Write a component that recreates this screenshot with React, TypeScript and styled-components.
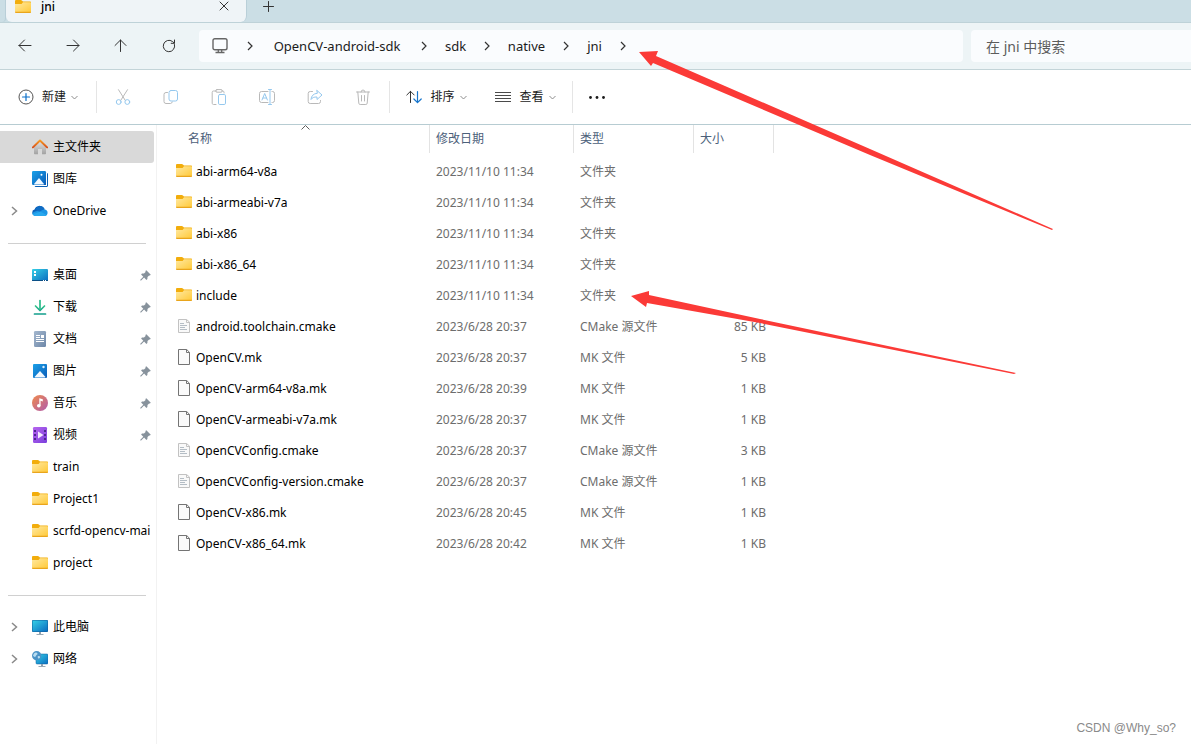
import React from 'react';
import styled, { createGlobalStyle, css } from 'styled-components';

const Global = createGlobalStyle`
  * { box-sizing: border-box; }
  body {
    margin: 0;
    background: #ffffff;
    color: #000000;
    font-family: "Noto Sans", "Noto Sans CJK SC", sans-serif;
    font-size: 12px;
    line-height: 16px;
  }
  button, input { font: inherit; color: inherit; }
`;

/* ---------- layout ---------- */

const Window = styled.div`
  position: relative;
  display: flex;
  flex-direction: column;
  min-height: 100vh;
  overflow: hidden;
`;

const bareButton = css`
  display: inline-flex;
  align-items: center;
  justify-content: center;
  padding: 0;
  border: 0;
  background: none;
  flex: none;
`;

const TabStrip = styled.header`
  display: flex;
  height: 23px;
  background: #cbdee5;
  border-bottom: 1px solid #bed2d8;
`;

const StripEdge = styled.div`
  width: 6px;
  border-right: 1px solid #b9cfd8;
  border-bottom-right-radius: 4px;
`;

const Tab = styled.div`
  display: flex;
  align-items: center;
  width: 241px;
  padding: 0 14px 8px 9px;
  gap: 10px;
  background: #eff4f7;
  border-radius: 0 0 6px 6px;
  border-right: 1px solid #b9cfd8;
`;

const TabTitle = styled.span`
  flex: 1;
  font-weight: 500;
  line-height: 14px;
`;

const TabButton = styled.button`
  ${bareButton}
  width: 16px;
  height: 16px;
`;

const NewTab = styled(TabButton)`
  margin-left: 14px;
`;

const NavBar = styled.nav`
  display: flex;
  align-items: center;
  height: 47px;
  padding-left: 1px;
  background: #edf4f6;
  border-bottom: 1px solid #c3d4d8;
`;

const NavButton = styled.button`
  ${bareButton}
  width: 48px;
  height: 32px;
`;

const AddressBar = styled.div`
  display: flex;
  align-items: center;
  flex: 1;
  height: 32px;
  margin-left: 6px;
  border-radius: 4px;
  background: #fafcfe;
  font-size: 13px;
`;

const AddressRoot = styled.button`
  ${bareButton}
  width: 41px;
  height: 28px;
`;

const Crumb = styled.button<{ $width: number }>`
  ${bareButton}
  width: ${p => p.$width}px;
  height: 28px;
  color: #1b1b1b;
  white-space: nowrap;
`;

const Separator = styled.span`
  display: flex;
  justify-content: center;
  flex: none;
  width: 20px;
`;

const SearchBox = styled.input`
  width: 220px;
  height: 32px;
  margin-left: 8px;
  padding: 0 15px;
  border: 0;
  border-radius: 4px 0 0 4px;
  background: #fafcfe;
  font-size: 14px;
  &::placeholder { color: #5c5c5c; opacity: 1; }
`;

const CommandBar = styled.div`
  display: flex;
  align-items: center;
  height: 55px;
  background: #ffffff;
  border-bottom: 1px solid #b7ccd2;
`;

const CommandGroup = styled.div`
  display: flex;
  margin: 0 2px;
`;

const Command = styled.button`
  ${bareButton}
  width: 48px;
  height: 32px;
`;

const MenuCommand = styled(Command)<{ $width: number }>`
  width: ${p => p.$width}px;
  gap: 5px;
  color: #1a1a1a;
  svg:first-child { margin-right: 3px; }
`;

const Rule = styled.div`
  width: 1px;
  height: 32px;
  background: #e5e5e5;
`;

const Body = styled.div`
  display: flex;
  flex: 1;
`;

const Sidebar = styled.aside`
  width: 157px;
  flex: none;
  padding-top: 6px;
  border-right: 1px solid #f2f2f2;
`;

const SideList = styled.ul`
  margin: 0;
  padding: 0;
  list-style: none;
`;

const SideItem = styled.li<{ $active?: boolean }>`
  display: flex;
  align-items: center;
  height: 32px;
  width: 154px;
  overflow: hidden;
  border-radius: 0 3px 3px 0;
  background: ${p => (p.$active ? '#d9d9d9' : 'transparent')};
`;

const Expander = styled.span`
  display: flex;
  justify-content: center;
  width: 32px;
  padding-right: 3px;
  flex: none;
`;

const SideLink = styled.a`
  display: flex;
  align-items: center;
  gap: 5px;
  flex: 1;
  color: #000000;
  text-decoration: none;
  white-space: nowrap;
`;

const Pin = styled.span`
  display: flex;
  flex: none;
  padding-right: 3px;
`;

const SideDivider = styled.hr`
  height: 1px;
  margin: 16px 10px 15px 8px;
  border: 0;
  background: #d0d0d0;
`;

const Content = styled.main`
  flex: 1;
  min-width: 0;
`;

const FileTable = styled.table`
  width: 617px;
  table-layout: fixed;
  border-spacing: 0;
`;

const HeadCell = styled.th<{ $first?: boolean }>`
  position: relative;
  height: 28px;
  padding: 0 0 0 ${p => (p.$first ? 31 : 6)}px;
  border-right: 1px solid #e3e3e3;
  color: #4c607a;
  font-weight: 400;
  text-align: left;
`;

const SortMark = styled.span`
  position: absolute;
  top: 0;
  left: 144px;
  display: flex;
`;

const Gap = styled.tr`
  height: 3px;
`;

const Cell = styled.td<{ $right?: boolean }>`
  height: 31px;
  padding: 0 8px 0 6px;
  color: #6d6d6d;
  text-align: ${p => (p.$right ? 'right' : 'left')};
  white-space: nowrap;
`;

const NameCell = styled(Cell)`
  padding-left: 19px;
  color: #000000;
`;

const FileName = styled.span`
  display: flex;
  align-items: center;
  gap: 4px;
  svg { margin-bottom: 1px; }
`;

const Annotations = styled.svg`
  position: absolute;
  top: 0;
  left: 0;
  pointer-events: none;
`;

const Watermark = styled.div`
  position: absolute;
  right: 15px;
  bottom: 8px;
  color: #8a8a8a;
  font-family: "Liberation Sans", sans-serif;
`;

/* ---------- icons ---------- */

const HiddenDefs = styled.svg`
  position: absolute;
`;

const Gradients = () => (
  <HiddenDefs width="0" height="0" aria-hidden="true">
    <defs>
      <linearGradient id="gFolder" x1="0" y1="0" x2="1" y2="1">
        <stop offset="0" stopColor="#ffe9a2" />
        <stop offset="1" stopColor="#ffc937" />
      </linearGradient>
      <linearGradient id="gRoof" x1="0" y1="0" x2="0" y2="1">
        <stop offset="0" stopColor="#f59a23" />
        <stop offset="1" stopColor="#d8501c" />
      </linearGradient>
      <linearGradient id="gWall" x1="0" y1="0" x2="0" y2="1">
        <stop offset="0" stopColor="#e2e2e2" />
        <stop offset="1" stopColor="#a2a2a2" />
      </linearGradient>
      <linearGradient id="gPicture" x1="0" y1="0" x2="1" y2="1">
        <stop offset="0" stopColor="#1ba1e8" />
        <stop offset="1" stopColor="#0a5cb8" />
      </linearGradient>
      <linearGradient id="gScreen" x1="0" y1="0" x2="1" y2="1">
        <stop offset="0" stopColor="#35d0e6" />
        <stop offset="1" stopColor="#0b6cc0" />
      </linearGradient>
      <linearGradient id="gDocument" x1="0" y1="0" x2="1" y2="1">
        <stop offset="0" stopColor="#a5b8cf" />
        <stop offset="1" stopColor="#6d87a8" />
      </linearGradient>
      <linearGradient id="gMusic" x1="0" y1="0" x2="1" y2="1">
        <stop offset="0" stopColor="#f08a4b" />
        <stop offset="1" stopColor="#b05cae" />
      </linearGradient>
      <linearGradient id="gVideo" x1="0" y1="0" x2="1" y2="1">
        <stop offset="0" stopColor="#b765ef" />
        <stop offset="1" stopColor="#7a3fdc" />
      </linearGradient>
      <linearGradient id="gDownload" x1="0" y1="0" x2="0" y2="1">
        <stop offset="0" stopColor="#35c48b" />
        <stop offset="1" stopColor="#129e8c" />
      </linearGradient>
    </defs>
  </HiddenDefs>
);

const Glyph16 = styled.svg`
  flex: none;
  width: 16px;
  height: 16px;
`;

const Icon = ({ children }: { children: React.ReactNode }) => (
  <Glyph16 viewBox="0 0 16 16" fill="none" aria-hidden="true">
    {children}
  </Glyph16>
);

const FolderIcon = () => (
  <Icon>
    <path d="M0 2.2C0 1.4.5 1 1.2 1h4.6c.5 0 .8.2 1.1.5L8 2.500h7c.6 0 1 .4 1 1v4H0z" fill="#f2ad0c" />
    <path d="M0 5h6.600L8 3.200h7.200c.5 0 .8.4.8.8v8.500c0 .8-.4 1.200-1.200 1.200H1.200C.4 13.700 0 13.300 0 12.500z" fill="url(#gFolder)" />
    <path d="M0 12.700h16c0 .8-.4 1.300-1.200 1.300H1.200C.4 14 0 13.500 0 12.700z" fill="#e9a51c" />
  </Icon>
);

const HomeIcon = () => (
  <Icon>
    <path d="M2 7.500L8 2l6 5.500V14.500a.7.7 0 0 1-.7.7H10V10H6v5.200H2.700a.7.7 0 0 1-.7-.7z" fill="url(#gWall)" />
    <path d="M.9 8.400L8 1.500l7.100 6.900" stroke="url(#gRoof)" strokeWidth="2" strokeLinecap="round" strokeLinejoin="round" />
  </Icon>
);

const GalleryIcon = () => (
  <Icon>
    <path d="M14.500 2c.9 0 1.500.5 1.500 1.300V14.500c0 .9-.6 1.500-1.500 1.500H4c-.8 0-1.500-.6-1.500-1.500z" fill="#0b5fb4" />
    <path d="M14 0v14H0v1h15V0z" fill="#fff" />
    <rect width="14" height="14" rx="1.200" fill="url(#gPicture)" />
    <path d="M2 13l5-6 5 6c-.3.500-.6.600-1 .600H3c-.4 0-.8-.1-1-.6z" fill="#f2f9ff" />
    <circle cx="9.500" cy="3.800" r="1" fill="#fff" />
  </Icon>
);

const CloudIcon = () => (
  <Icon>
    <path d="M3 12.500a3 3 0 0 1-.5-5.900A5.200 5.200 0 0 1 12 5.500l-5 4z" fill="#0a5fb8" />
    <path d="M3.300 6.500C4 4.200 6 3 8 3c2.300 0 4.200 1.500 4.800 3.500L8 10z" fill="#0f6cc4" />
    <path d="M12.600 6.500A3.300 3.300 0 0 1 13 13H3.500C2 13 .5 12 .2 10.500 2 8 6 7 8 9c1-1.500 2.800-2.500 4.600-2.500z" fill="#1b95e5" />
    <path d="M.8 11.300L8.200 8.600l6.500 3.300c-.5.700-1.100 1.100-2 1.100H3.500C2.300 13 1.300 12.300.8 11.300z" fill="#28a8ee" />
  </Icon>
);

const DesktopIcon = () => (
  <Icon>
    <rect y="2" width="16" height="12" rx="1" fill="url(#gScreen)" />
    <path d="M2 4h2v2H2zM2 7h2v2H2z" fill="#fff" />
    <path d="M0 13h16v.5a.8.800 0 0 1-.8.500H.8A.8.800 0 0 1 0 13.500z" fill="#0b4f86" />
    <path d="M11 13h1v1h-1zM13 13h1v1h-1z" fill="#fff" />
  </Icon>
);

const DownloadIcon = () => (
  <Icon>
    <path d="M3.500 7L8 11.500 12.500 7" stroke="url(#gDownload)" strokeWidth="1.700" strokeLinecap="round" strokeLinejoin="round" />
    <path d="M2.500 15h11" stroke="#129e8c" strokeWidth="1.700" strokeLinecap="round" />
    <path d="M8 1.500v9.500" stroke="#2bbb8b" strokeWidth="1.700" strokeLinecap="round" />
  </Icon>
);

const DocumentIcon = () => (
  <Icon>
    <rect x="2" width="12" height="16" rx="1.200" fill="url(#gDocument)" />
    <path d="M4 4.500h4M4 6.500h4M4 8.500h8M4 10.500h8" stroke="#fff" />
    <path d="M9 4h3v3H9z" fill="#fff" />
  </Icon>
);

const PictureIcon = () => (
  <Icon>
    <rect x="1" y="1" width="14" height="14" rx="1" fill="url(#gPicture)" />
    <path d="M2.500 14L8 8l5.500 6c-.3.500-.7.500-1 .500h-9c-.4 0-.7 0-1-.5z" fill="#f2f9ff" />
    <circle cx="11.500" cy="4" r="1.200" fill="#d8f0ff" />
  </Icon>
);

const MusicIcon = () => (
  <Icon>
    <circle cx="8" cy="8" r="8" fill="url(#gMusic)" />
    <circle cx="6.800" cy="10.800" r="1.800" fill="#fff" />
    <path d="M7.300 3.200l3.500 1v2.200L8.600 5.800v5H7.300z" fill="#fff" />
  </Icon>
);

const VideoIcon = () => (
  <Icon>
    <rect x="1" width="14" height="16" rx="1.200" fill="url(#gVideo)" />
    <path d="M2 3h2v2H2zM2 7h2v2H2zM2 11h2v2H2zM12 3h2v2h-2zM12 7h2v2h-2zM12 11h2v2h-2z" fill="#4d2590" />
    <path d="M6 4.500L11.500 8 6 11.500z" fill="#f3e8ff" />
  </Icon>
);

const ComputerIcon = () => (
  <Icon>
    <rect y="1" width="16" height="12" rx="1" fill="#0d5c9c" />
    <rect x=".5" y="1.500" width="15" height="11" rx=".6" fill="url(#gScreen)" />
    <path d="M7 13h2v2H7z" fill="#8fa0ae" />
    <path d="M4.500 15.500h7" stroke="#9aa9b5" />
  </Icon>
);

const NetworkIcon = () => (
  <Icon>
    <rect x="4" y="3" width="12" height="10" rx="1" fill="url(#gScreen)" stroke="#0d5c9c" strokeWidth=".5" />
    <path d="M9 13h2v2H9z" fill="#8fa0ae" />
    <path d="M6.500 15.500h7" stroke="#9aa9b5" />
    <circle cx="4.700" cy="4.700" r="4.700" fill="#4b93c7" />
    <path d="M2 2.500c1.500-1.500 3-1 3.500 0S4 4 3.500 5.500 1.500 5 1 4.500zM6.500 5c1 0 2 .5 1.500 1.500S6.500 8 6 7s-.5-2 .5-2z" fill="#b8dcf0" />
  </Icon>
);

const PinIcon = () => (
  <svg width="11" height="11" viewBox="0 0 11 11" aria-hidden="true">
    <path d="M6.300.2L10.800 4.700 9.900 5.600 9.100 5.400 7.500 7 7.400 9 6.400 9.900 4.100 7.600 1.100 10.600H.3V9.800L3.300 6.800 1.100 4.600 2 3.600 4 3.500 5.600 1.900 5.400 1.100z" fill="#87929c" />
  </svg>
);

const FileIcon = () => (
  <Icon>
    <path d="M2.500.5h8.200l2.800 2.800v12.200h-11z" fill="#fafafa" stroke="#747474" />
    <path d="M10.500.5v3h3" stroke="#747474" />
  </Icon>
);

const TextFileIcon = () => (
  <Icon>
    <path d="M2.500 1.500h8l3 2.500v10.500h-11z" fill="#f9f9f9" stroke="#c2c2c2" />
    <path d="M10.500 1.500V4.500h3" stroke="#c2c2c2" />
    <path d="M4 5.500h4M4 7.500h7M4 9.500h5M4 11.500h7" stroke="#b4bdc5" />
  </Icon>
);

const Chevron = () => (
  <svg width="6" height="10" viewBox="0 0 6 10" fill="none" aria-hidden="true">
    <path d="M1 1l4 4-4 4" stroke="#333333" strokeWidth="1.200" />
  </svg>
);

const SideChevron = () => (
  <svg width="7" height="10" viewBox="0 0 7 10" fill="none" aria-hidden="true">
    <path d="M1 1l4.500 4L1 9" stroke="#8a8a8a" strokeWidth="1.500" />
  </svg>
);

const DownMark = () => (
  <svg width="7" height="5" viewBox="0 0 7 5" fill="none" aria-hidden="true">
    <path d="M.5 1l3 3 3-3" stroke="#8d8d8d" />
  </svg>
);

const line = { stroke: '#333333', strokeWidth: 1, strokeLinecap: 'round', strokeLinejoin: 'round' } as const;
const grey = { stroke: '#b9b9b9', strokeLinecap: 'round', strokeLinejoin: 'round' } as const;
const blue = { stroke: '#95c8ee', strokeLinecap: 'round', strokeLinejoin: 'round' } as const;

const BackIcon = () => <Icon><path d="M14 7.500H2M7.500 2L2 7.500l5.500 5.500" {...line} /></Icon>;
const ForwardIcon = () => <Icon><path d="M2 7.500h12M8.500 2L14 7.500 8.500 13" {...line} /></Icon>;
const UpIcon = () => <Icon><path d="M7.500 13.500V2M2 7.500L7.500 2 13 7.500" {...line} /></Icon>;
const RefreshIcon = () => <Icon><path d="M13.500 6.500A5.700 5.700 0 1 1 11.500 3.500L13.200 5M13.500 2v3.300H10.200" {...line} /></Icon>;
const MonitorIcon = () => (
  <Icon>
    <rect x="1" y=".8" width="14" height="11" rx="1.800" stroke="#666666" strokeWidth="1.400" />
    <path d="M6.300 12v2.500M9.700 12v2.500M3.500 14.500h9" stroke="#666666" strokeWidth="1.300" />
  </Icon>
);

const NewIcon = () => (
  <Icon>
    <circle cx="8" cy="8" r="7" stroke="#555" />
    <path d="M8 4.500v7M4.500 8h7" stroke="#0a6fc8" strokeWidth="1.200" strokeLinecap="round" />
  </Icon>
);
const CutIcon = () => (
  <Icon>
    <path d="M3.500.7l6.700 10.600M12.500.7L5.800 11.300" {...grey} />
    <circle cx="3.700" cy="13" r="2.400" {...blue} />
    <circle cx="12.300" cy="13" r="2.400" {...blue} />
  </Icon>
);
const CopyIcon = () => (
  <Icon>
    <path d="M4.500 3.500H3A2 2 0 0 0 1 5.500V12.500a2 2 0 0 0 2 2h4.500a2 2 0 0 0 1.800-1.500" {...grey} />
    <rect x="6" y="1.500" width="8.500" height="10.500" rx="2" {...blue} />
  </Icon>
);
const PasteIcon = () => (
  <Icon>
    <path d="M5 2H2.500A1.300 1.300 0 0 0 1.200 3.300v11A1.300 1.300 0 0 0 2.500 15.500H5M11 2h.7A1.300 1.300 0 0 1 13 3.300V4" {...grey} />
    <rect x="4.700" y=".6" width="6.600" height="2.600" rx="1.300" {...grey} />
    <rect x="7.500" y="5.500" width="7" height="10" rx="1.300" {...blue} />
  </Icon>
);
const RenameIcon = () => (
  <Icon>
    <path d="M9 2.500H2.500a2 2 0 0 0-2 2v7a2 2 0 0 0 2 2H9M13 2.500h.5a2 2 0 0 1 2 2v7a2 2 0 0 1-2 2H13" {...grey} />
    <path d="M11 .8v14.400M9.500.5h3M9.500 15.500h3M3 11l2.700-6.500L8.400 11M4 9h3.500" {...blue} />
  </Icon>
);
const ShareIcon = () => (
  <Icon>
    <path d="M5.500 2.500H3.300A2 2 0 0 0 1.200 4.500v8a2 2 0 0 0 2 2h8.300a2 2 0 0 0 2-2V11.500" {...grey} />
    <path d="M10 1.500L15 6l-5 4.500V8C7 7.800 5 8.800 4 10.500 4.200 7 6.500 4.500 10 4.300z" {...blue} />
  </Icon>
);
const TrashIcon = () => (
  <Icon>
    <path d="M1.500 3h13M6 3a2 2 0 0 1 4 0M2.800 3l1 11.200a1.400 1.400 0 0 0 1.400 1.300h5.600a1.400 1.400 0 0 0 1.400-1.300L13.200 3M6.500 6.500v5.500M9.500 6.500v5.500" {...grey} />
  </Icon>
);
const SortIcon = () => (
  <Icon>
    <path d="M4.500 13.500V2.500M.8 6L4.500 2.300 8.200 6" {...line} />
    <path d="M11.500 2.500v11M7.900 10l3.600 3.700L15.200 10" stroke="#1675cc" strokeWidth="1.200" strokeLinecap="round" strokeLinejoin="round" />
  </Icon>
);
const ViewIcon = () => <Icon><path d="M0 3.500h16M0 6.500h16M0 9.500h16M0 12.500h16" stroke="#4a4a4a" /></Icon>;
const MoreIcon = () => (
  <Icon>
    <circle cx="1.500" cy="8.500" r="1.400" fill="#1b1b1b" />
    <circle cx="8" cy="8.500" r="1.400" fill="#1b1b1b" />
    <circle cx="14.500" cy="8.500" r="1.400" fill="#1b1b1b" />
  </Icon>
);

/* ---------- data ---------- */

type Side = { label: string; icon: () => React.ReactElement; pinned?: boolean; expandable?: boolean; active?: boolean };

const sideGroups: Side[][] = [
  [
    { label: '主文件夹', icon: HomeIcon, active: true },
    { label: '图库', icon: GalleryIcon },
    { label: 'OneDrive', icon: CloudIcon, expandable: true },
  ],
  [
    { label: '桌面', icon: DesktopIcon, pinned: true },
    { label: '下载', icon: DownloadIcon, pinned: true },
    { label: '文档', icon: DocumentIcon, pinned: true },
    { label: '图片', icon: PictureIcon, pinned: true },
    { label: '音乐', icon: MusicIcon, pinned: true },
    { label: '视频', icon: VideoIcon, pinned: true },
    { label: 'train', icon: FolderIcon },
    { label: 'Project1', icon: FolderIcon },
    { label: 'scrfd-opencv-mai', icon: FolderIcon },
    { label: 'project', icon: FolderIcon },
  ],
  [
    { label: '此电脑', icon: ComputerIcon, expandable: true },
    { label: '网络', icon: NetworkIcon, expandable: true },
  ],
];

const kinds = {
  folder: { text: '文件夹', icon: FolderIcon },
  cmake: { text: 'CMake 源文件', icon: TextFileIcon },
  mk: { text: 'MK 文件', icon: FileIcon },
};

const files: [string, string, keyof typeof kinds, string][] = [
  ['abi-arm64-v8a', '2023/11/10 11:34', 'folder', ''],
  ['abi-armeabi-v7a', '2023/11/10 11:34', 'folder', ''],
  ['abi-x86', '2023/11/10 11:34', 'folder', ''],
  ['abi-x86_64', '2023/11/10 11:34', 'folder', ''],
  ['include', '2023/11/10 11:34', 'folder', ''],
  ['android.toolchain.cmake', '2023/6/28 20:37', 'cmake', '85 KB'],
  ['OpenCV.mk', '2023/6/28 20:37', 'mk', '5 KB'],
  ['OpenCV-arm64-v8a.mk', '2023/6/28 20:39', 'mk', '1 KB'],
  ['OpenCV-armeabi-v7a.mk', '2023/6/28 20:37', 'mk', '1 KB'],
  ['OpenCVConfig.cmake', '2023/6/28 20:37', 'cmake', '3 KB'],
  ['OpenCVConfig-version.cmake', '2023/6/28 20:37', 'cmake', '1 KB'],
  ['OpenCV-x86.mk', '2023/6/28 20:45', 'mk', '1 KB'],
  ['OpenCV-x86_64.mk', '2023/6/28 20:42', 'mk', '1 KB'],
];

const crumbs: [string, number][] = [
  ['OpenCV-android-sdk', 154],
  ['sdk', 43],
  ['native', 59],
  ['jni', 37],
];

const editCommands: [string, () => React.ReactElement][] = [
  ['剪切', CutIcon],
  ['复制', CopyIcon],
  ['粘贴', PasteIcon],
  ['重命名', RenameIcon],
  ['共享', ShareIcon],
  ['删除', TrashIcon],
];

/* ---------- page ---------- */

export default function App() {
  return (
    <Window>
      <Global />
      <Gradients />
      <TabStrip>
        <StripEdge />
        <Tab>
          <FolderIcon />
          <TabTitle>jni</TabTitle>
          <TabButton aria-label="关闭标签页">
            <Icon><path d="M4 3l8 8M12 3l-8 8" {...line} /></Icon>
          </TabButton>
        </Tab>
        <NewTab aria-label="新建标签页">
          <Icon><path d="M7.500 1.500v10M2.500 6.500h10" {...line} /></Icon>
        </NewTab>
      </TabStrip>

      <NavBar>
        <NavButton aria-label="后退"><BackIcon /></NavButton>
        <NavButton aria-label="前进"><ForwardIcon /></NavButton>
        <NavButton aria-label="向上"><UpIcon /></NavButton>
        <NavButton aria-label="刷新"><RefreshIcon /></NavButton>
        <AddressBar>
          <AddressRoot aria-label="此电脑"><MonitorIcon /></AddressRoot>
          <Separator><Chevron /></Separator>
          {crumbs.map(([name, width]) => (
            <React.Fragment key={name}>
              <Crumb $width={width}>{name}</Crumb>
              <Separator><Chevron /></Separator>
            </React.Fragment>
          ))}
        </AddressBar>
        <SearchBox aria-label="搜索" placeholder="在 jni 中搜索" />
      </NavBar>

      <CommandBar>
        <MenuCommand $width={96}><NewIcon />新建<DownMark /></MenuCommand>
        <Rule />
        <CommandGroup>
          {editCommands.map(([label, Glyph]) => (
            <Command key={label} aria-label={label} disabled><Glyph /></Command>
          ))}
        </CommandGroup>
        <Rule />
        <CommandGroup>
          <MenuCommand $width={89}><SortIcon />排序<DownMark /></MenuCommand>
          <MenuCommand $width={89}><ViewIcon />查看<DownMark /></MenuCommand>
        </CommandGroup>
        <Rule />
        <Command aria-label="更多"><MoreIcon /></Command>
      </CommandBar>

      <Body>
        <Sidebar>
          {sideGroups.map((group, i) => (
            <React.Fragment key={i}>
              {i > 0 && <SideDivider />}
              <SideList>
                {group.map(({ label, icon: Glyph, pinned, expandable, active }) => (
                  <SideItem key={label} $active={active}>
                    <Expander>{expandable && <SideChevron />}</Expander>
                    <SideLink href="#"><Glyph />{label}</SideLink>
                    {pinned && <Pin><PinIcon /></Pin>}
                  </SideItem>
                ))}
              </SideList>
            </React.Fragment>
          ))}
        </Sidebar>

        <Content>
          <FileTable>
            <colgroup>
              <col width="273" />
              <col width="144" />
              <col width="120" />
              <col width="80" />
            </colgroup>
            <thead>
              <tr>
                <HeadCell $first>
                  名称
                  <SortMark>
                    <svg width="9" height="5" viewBox="0 0 9 5" fill="none" aria-hidden="true">
                      <path d="M.5 4.500l4-4 4 4" stroke="#5e5e5e" />
                    </svg>
                  </SortMark>
                </HeadCell>
                <HeadCell>修改日期</HeadCell>
                <HeadCell>类型</HeadCell>
                <HeadCell>大小</HeadCell>
              </tr>
            </thead>
            <tbody>
              <Gap />
              {files.map(([name, date, kind, size]) => {
                const { text, icon: Glyph } = kinds[kind];
                return (
                  <tr key={name}>
                    <NameCell><FileName><Glyph />{name}</FileName></NameCell>
                    <Cell>{date}</Cell>
                    <Cell>{text}</Cell>
                    <Cell $right>{size}</Cell>
                  </tr>
                );
              })}
            </tbody>
          </FileTable>
        </Content>
      </Body>

      <Annotations width="1060" height="380" viewBox="0 0 1060 380" aria-hidden="true">
        <path d="M639 52L658 51 656 56 870 149 1053 229 1052 230 870 155 653 63 651 66z" fill="#fb3a37" />
        <path d="M631 296L649 291 649 295 760 319 1016 373 1014 374 760 323 647 303 646 307z" fill="#fb3a37" />
      </Annotations>
      <Watermark>CSDN @Why_so?</Watermark>
    </Window>
  );
}
